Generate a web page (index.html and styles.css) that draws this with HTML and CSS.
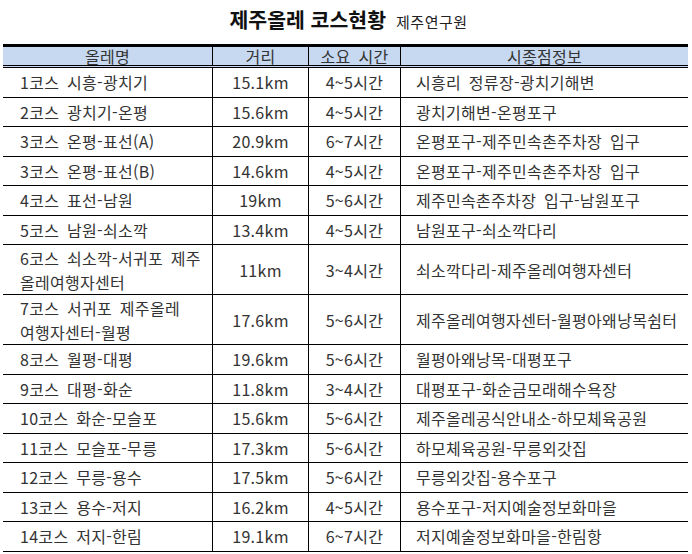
FILE: index.html
```html
<!DOCTYPE html>
<html lang="ko">
<head>
<meta charset="utf-8">
<link rel="stylesheet" href="styles.css">
</head>
<body>
<div class="page">
  <div class="title">
    <span class="title-main">제주올레 코스현황</span>
    <span class="title-sub">제주연구원</span>
  </div>
  <table class="courses">
    <thead>
      <tr><th class="c1">올레명</th><th class="c2">거리</th><th class="c3">소요 시간</th><th class="c4">시종점정보</th></tr>
    </thead>
    <tbody>
      <tr><td class="name">1코스 시흥-광치기</td><td class="mid">15.1km</td><td class="mid">4~5시간</td><td class="info">시흥리 정류장-광치기해변</td></tr>
      <tr><td class="name">2코스 광치기-온평</td><td class="mid">15.6km</td><td class="mid">4~5시간</td><td class="info">광치기해변-온평포구</td></tr>
      <tr><td class="name">3코스 온평-표선(A)</td><td class="mid">20.9km</td><td class="mid">6~7시간</td><td class="info">온평포구-제주민속촌주차장 입구</td></tr>
      <tr><td class="name">3코스 온평-표선(B)</td><td class="mid">14.6km</td><td class="mid">4~5시간</td><td class="info">온평포구-제주민속촌주차장 입구</td></tr>
      <tr><td class="name">4코스 표선-남원</td><td class="mid">19km</td><td class="mid">5~6시간</td><td class="info">제주민속촌주차장 입구-남원포구</td></tr>
      <tr><td class="name">5코스 남원-쇠소깍</td><td class="mid">13.4km</td><td class="mid">4~5시간</td><td class="info">남원포구-쇠소깍다리</td></tr>
      <tr class="tall"><td class="name">6코스 쇠소깍-서귀포 제주<br>올레여행자센터</td><td class="mid">11km</td><td class="mid">3~4시간</td><td class="info">쇠소깍다리-제주올레여행자센터</td></tr>
      <tr class="tall"><td class="name">7코스 서귀포 제주올레<br>여행자센터-월평</td><td class="mid">17.6km</td><td class="mid">5~6시간</td><td class="info">제주올레여행자센터-월평아왜낭목쉼터</td></tr>
      <tr><td class="name">8코스 월평-대평</td><td class="mid">19.6km</td><td class="mid">5~6시간</td><td class="info">월평아왜낭목-대평포구</td></tr>
      <tr><td class="name">9코스 대평-화순</td><td class="mid">11.8km</td><td class="mid">3~4시간</td><td class="info">대평포구-화순금모래해수욕장</td></tr>
      <tr><td class="name">10코스 화순-모슬포</td><td class="mid">15.6km</td><td class="mid">5~6시간</td><td class="info">제주올레공식안내소-하모체육공원</td></tr>
      <tr><td class="name">11코스 모슬포-무릉</td><td class="mid">17.3km</td><td class="mid">5~6시간</td><td class="info">하모체육공원-무릉외갓집</td></tr>
      <tr><td class="name">12코스 무릉-용수</td><td class="mid">17.5km</td><td class="mid">5~6시간</td><td class="info">무릉외갓집-용수포구</td></tr>
      <tr><td class="name">13코스 용수-저지</td><td class="mid">16.2km</td><td class="mid">4~5시간</td><td class="info">용수포구-저지예술정보화마을</td></tr>
      <tr><td class="name">14코스 저지-한림</td><td class="mid">19.1km</td><td class="mid">6~7시간</td><td class="info">저지예술정보화마을-한림항</td></tr>
    </tbody>
  </table>
</div>
</body>
</html>
```

FILE: styles.css
```css
html, body {
  margin: 0;
  padding: 0;
  background: #ffffff;
}

body {
  font-family: "Noto Sans CJK KR", "Noto Sans", sans-serif;
  color: #333333;
}

.page {
  width: 685px;
  padding: 0 4px 0 3px;
}

.title {
  height: 44px;
  display: flex;
  justify-content: center;
  align-items: baseline;
  gap: 10px;
  padding-left: 6px;
  box-sizing: border-box;
  padding-top: 5px;
}

.title-main {
  font-size: 20.5px;
  font-weight: 700;
  color: #111111;
  line-height: 28px;
}

.title-sub {
  font-size: 15px;
  letter-spacing: 0.5px;
  color: #222222;
}

.courses {
  width: 685px;
  border-collapse: collapse;
  table-layout: fixed;
  border-top: 3px solid #000000;
  border-bottom: 1px solid #000000;
  font-size: 16px;
  letter-spacing: 0.3px;
  word-spacing: 3px;
}

.c1 { width: 209px; }
.c2 { width: 95px; }
.c3 { width: 91px; }
.c4 { width: auto; }

.courses th {
  background: #c6d9f0;
  font-weight: 400;
  height: 18px;
  padding: 0;
  line-height: 18px;
  border-bottom: 3px double #000000;
  border-left: 1px solid #000000;
  text-align: center;
}

.courses td {
  height: 28.5px;
  padding: 0;
  border-bottom: 1px solid #000000;
  border-left: 1px solid #000000;
  line-height: 24px;
  white-space: nowrap;
}

.courses th:first-child,
.courses td:first-child {
  border-left: none;
}

.courses tr.tall td {
  height: 49px;
}

.name {
  padding-left: 17px !important;
}

.mid {
  text-align: center;
}

.info {
  padding-left: 15px !important;
}
```
